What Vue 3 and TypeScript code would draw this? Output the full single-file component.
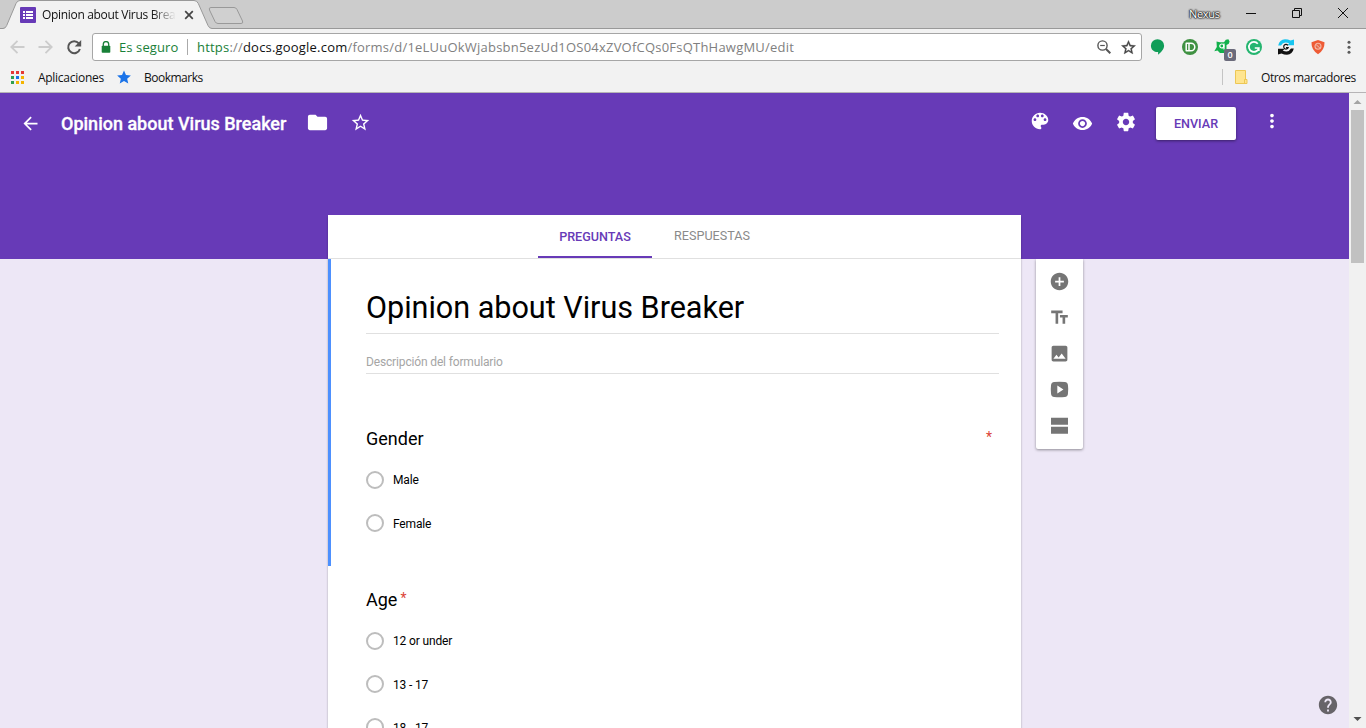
<script setup lang="ts">
interface Tool {
  name: string
  path: string
}
interface Question {
  title: string
  required: boolean
  options: string[]
}

const appColors: string[] = [
  '#e53935', '#e53935', '#e53935',
  '#2e9e4f', '#1a73e8', '#f4b400',
  '#2e9e4f', '#f4b400', '#f4b400',
]

const tools: Tool[] = [
  { name: 'add', path: 'M12 2C6.48 2 2 6.48 2 12s4.480 10 10 10 10-4.480 10-10S17.520 2 12 2zm5 11h-4v4h-2v-4H7v-2h4V7h2v4h4v2z' },
  { name: 'text', path: 'M2.5 4v3h5v12h3V7h5V4h-13zm19 5h-9v3h3v7h3v-7h3V9z' },
  { name: 'image', path: 'M21 19V5c0-1.100-.9-2-2-2H5c-1.100 0-2 .9-2 2v14c0 1.100.9 2 2 2h14c1.100 0 2-.9 2-2zM8.500 13.500l2.500 3.010L14.500 12l4.500 6H5l3.500-4.500z' },
  { name: 'video', path: 'M6 3.500Q12 3 18 3.500Q21.500 3.700 21.700 7.500Q22.300 12 21.700 16.500Q21.500 20.300 18 20.500Q12 21 6 20.500Q2.500 20.300 2.300 16.500Q1.700 12 2.300 7.500Q2.500 3.700 6 3.500zM9.500 7.500v9l7-4.500z' },
  { name: 'section', path: 'M2.300 3h19.400v8H2.300zM2.300 13.300h19.400v8H2.300z' },
]

const questions: Question[] = [
  { title: 'Gender', required: false, options: ['Male', 'Female'] },
  { title: 'Age', required: true, options: ['12 or under', '13 - 17', '18 - 17'] },
]
</script>

<template>
  <div class="window">
    <div class="tabstrip">
      <svg class="tabshape" width="250" height="29" viewBox="0 0 250 29">
        <path d="M0 28.500H3Q5.500 28.500 6.700 25.500L16 3.500Q17.300.5 20 .5H194Q197 .5 198.300 3.500L208 25.500Q209.300 28.500 212 28.500V29H0z" fill="#f2f2f2" />
        <path d="M0 28.500H3Q5.500 28.500 6.700 25.500L16 3.500Q17.300.5 20 .5H194Q197 .5 198.300 3.500L208 25.500Q209.300 28.500 212 28.500H250" fill="none" stroke="#999" />
        <path d="M211 7.500H234Q236 7.500 237 9.500L242.500 21Q243.500 23.500 241 23.500H218Q216 23.500 215 21.500L209.500 10Q208.500 7.500 211 7.500z" fill="#d0d0d0" stroke="#999" />
      </svg>
      <div class="tabcontent">
        <svg width="16" height="16" viewBox="0 0 16 16">
          <rect width="16" height="16" rx="1" fill="#673ab7" />
          <path d="M3 4h2v2H3zM6 4h7v2H6zM3 7h2v2H3zM6 7h7v2H6zM3 10h2v2H3zM6 10h7v2H6z" fill="#fff" />
        </svg>
        <span class="tabtitle">Opinion about Virus Breaker</span>
        <svg class="tabclose" width="10" height="10" viewBox="0 0 10 10"><path d="M1.200 1.200l7.600 7.600M8.800 1.200L1.200 8.800" stroke="#444" stroke-width="1.700" /></svg>
      </div>
      <span class="user">Nexus</span>
      <svg class="winctl" width="104" height="14" viewBox="0 0 104 14" fill="none" stroke="#111">
        <path d="M0 7.500h10M46.500 4.500h7v7h-7zM48.500 4V2.500h7v7H54M92 2l10 10M102 2l-10 10" />
      </svg>
    </div>

    <div class="toolbar">
      <svg class="nav" width="76" height="18" viewBox="0 0 76 18" fill="none" stroke="#ccc" stroke-width="1.800">
        <path d="M15.500 9H2.500M8.500 2.800L2.300 9l6.200 6.200M29.500 9h13M36.500 2.800L42.700 9l-6.200 6.200" />
        <path d="M69.800 5.300A6 6 0 1 0 70.900 11" stroke="#555" stroke-width="2" />
        <path d="M72.200 2v6.500h-6.500z" fill="#555" stroke="none" />
      </svg>
      <div class="omnibox">
        <svg width="10" height="12" viewBox="0 0 10 12">
          <path d="M2.300 5V3.300a2.700 2.700 0 0 1 5.400 0V5" fill="none" stroke="#188038" stroke-width="1.300" />
          <rect x=".7" y="4.700" width="8.600" height="7" rx=".8" fill="#188038" />
        </svg>
        <span class="secure">Es seguro</span>
        <span class="divider"></span>
        <span class="url"><span class="scheme">https</span>://<span class="host">docs.google.com</span><span class="path">/forms/d/1eLUuOkWjabsbn5ezUd1OS04xZVOfCQs0FsQThHawgMU/edit</span></span>
        <svg class="zoomicon" width="14" height="14" viewBox="0 0 14 14" fill="none" stroke="#555">
          <circle cx="5.500" cy="5.500" r="4.600" stroke-width="1.400" />
          <path d="M9 9l4.300 4.300" stroke-width="2" />
          <path d="M3.200 5.500h4.600" stroke-width="1.200" />
        </svg>
        <svg class="staricon" width="17" height="17" viewBox="0 0 24 24"><path fill="#444" stroke="#444" stroke-width=".5" d="M22 9.240l-7.190-.62L12 2 9.190 8.630 2 9.240l5.460 4.730L5.820 21 12 17.270 18.180 21l-1.630-7.030L22 9.240zM12 15.400l-3.760 2.270 1-4.280-3.320-2.880 4.380-.38L12 6.100l1.710 4.040 4.380.38-3.320 2.880 1 4.280L12 15.400z" /></svg>
      </div>
      <div class="extensions">
        <svg width="16" height="18" viewBox="0 0 16 18"><path d="M7.500 1.200a6.600 6.600 0 0 1 6.600 6.500c0 3.500-3 6.300-6 9.100v-2.700C3.800 14.200.9 11.500.9 7.700A6.600 6.600 0 0 1 7.500 1.200z" fill="#109d58" /></svg>
        <svg width="16" height="18" viewBox="0 0 16 18">
          <circle cx="8" cy="9" r="8" fill="#3f9142" />
          <path d="M4.200 5.200H9a3.800 3.800 0 0 1 0 7.600H4.200zM7 5.200v7.600" fill="none" stroke="#fff" stroke-width="1.500" stroke-linejoin="round" />
        </svg>
        <div class="badged">
          <svg width="16" height="18" viewBox="0 0 16 18">
            <path d="M2.500 3.500L6 4.300h4l1.800-2.600 2.600-.4 1.200 2.200-.8 2.300-2.300 1.200v5l-2 3H6L3.500 12.500.3 13.200 2.800 9z" fill="#12b04b" />
            <circle cx="7.800" cy="8" r="2" fill="none" stroke="#fff" stroke-width="1.200" />
            <path d="M10 5.500v6" stroke="#fff" stroke-width="1.200" />
          </svg>
          <span class="badge">0</span>
        </div>
        <svg width="16" height="18" viewBox="0 0 16 18">
          <circle cx="8" cy="9" r="8" fill="#25b570" />
          <path d="M11.800 5.700A5 5 0 1 0 12.800 10H8.800M12.800 10v3" fill="none" stroke="#fff" stroke-width="1.700" />
        </svg>
        <svg width="18" height="18" viewBox="0 0 18 18">
          <path d="M1.200 7.500Q2.500 1.500 8 1.300q3 0 5.500 1.200L17 1.500v5.700H10l2.300-1.700Q6.500 3 4 7.500z" fill="#18c5f0" />
          <path d="M16.800 10.500Q15.500 16.500 10 16.700q-3 0-5.500-1.200L1 16.500v-5.700H8l-2.300 1.700Q11.500 15 14 10.500z" fill="#111" />
          <path d="M10.800 7.300a2.300 2.300 0 1 0 .3 2.400H9" fill="none" stroke="#111" stroke-width="1.200" />
        </svg>
        <svg width="16" height="18" viewBox="0 0 16 18">
          <path d="M8 2l6.500 2.200q.3 7.500-6.500 12Q1.200 11.700 1.500 4.200z" fill="#ee5b35" />
          <circle cx="8" cy="8.300" r="3" fill="#e86b4a" stroke="#f5b8a6" stroke-width="1.100" />
          <path d="M6 6.500l4 3.700" stroke="#f5b8a6" />
        </svg>
        <svg width="6" height="18" viewBox="0 0 6 18" fill="#5a5a5a"><circle cx="3" cy="4.300" r="1.500" /><circle cx="3" cy="9.300" r="1.500" /><circle cx="3" cy="14.300" r="1.500" /></svg>
      </div>
    </div>

    <div class="bookmarks">
      <div class="apps">
        <i v-for="(c, i) in appColors" :key="i" :style="{ background: c }"></i>
      </div>
      <span class="aplicaciones">Aplicaciones</span>
      <svg class="bstar" width="14" height="14" viewBox="0 0 24 24"><path fill="#1a73e8" d="M12 .8l3.400 7.800 8.400.7-6.400 5.600 1.900 8.300L12 18.800l-7.300 4.400 1.900-8.300L.2 9.300l8.400-.7z" /></svg>
      <span class="marks">Bookmarks</span>
      <span class="bdivider"></span>
      <svg class="bfolder" width="13" height="14" viewBox="0 0 13 14"><path d="M.5.5h10v9h1.500v4H.5z" fill="#ffe590" stroke="#edc755" /><path d="M9.500 13V9.500H12" fill="none" stroke="#edc755" /></svg>
      <span class="otros">Otros marcadores</span>
    </div>

    <div class="viewport">
      <div class="page">
        <header>
          <svg class="arrow" width="21" height="21" viewBox="0 0 24 24"><path d="M20 11H7.830l5.590-5.590L12 4l-8 8 8 8 1.410-1.410L7.830 13H20v-2z" /></svg>
          <span class="doctitle">Opinion about Virus Breaker</span>
          <svg class="folder" width="23" height="23" viewBox="0 0 24 24"><path d="M10 4H4c-1.100 0-1.990.9-1.990 2L2 18c0 1.100.9 2 2 2h16c1.100 0 2-.9 2-2V8c0-1.100-.9-2-2-2h-8l-2-2z" /></svg>
          <svg class="fav" width="21" height="21" viewBox="0 0 24 24"><path d="M22 9.240l-7.190-.62L12 2 9.190 8.630 2 9.240l5.460 4.730L5.820 21 12 17.270 18.180 21l-1.630-7.030L22 9.240zM12 15.400l-3.760 2.270 1-4.280-3.320-2.880 4.380-.38L12 6.100l1.710 4.040 4.380.38-3.320 2.880 1 4.280L12 15.400z" /></svg>
          <svg class="palette" width="22" height="22" viewBox="0 0 24 24"><path d="M12 3c-4.970 0-9 4.030-9 9s4.030 9 9 9c.83 0 1.500-.67 1.500-1.500 0-.39-.15-.74-.39-1.010-.23-.26-.38-.61-.38-.99 0-.83.67-1.500 1.500-1.500H16c2.760 0 5-2.240 5-5 0-4.420-4.030-8-9-8zm-5.500 9c-.83 0-1.500-.67-1.500-1.500S5.670 9 6.500 9 8 9.670 8 10.500 7.330 12 6.500 12zm3-4C8.670 8 8 7.330 8 6.500S8.670 5 9.500 5s1.500.67 1.500 1.500S10.330 8 9.500 8zm5 0c-.83 0-1.500-.67-1.500-1.500S13.670 5 14.500 5s1.500.67 1.500 1.500S15.330 8 14.500 8zm3 4c-.83 0-1.500-.67-1.500-1.500S16.670 9 17.500 9s1.500.67 1.500 1.500-.67 1.500-1.500 1.500z" /></svg>
          <svg class="eye" width="21" height="21" viewBox="0 0 24 24"><path d="M12 4.500C7 4.500 2.730 7.610 1 12c1.730 4.390 6 7.500 11 7.500s9.270-3.110 11-7.500c-1.730-4.390-6-7.500-11-7.500zM12 17c-2.760 0-5-2.240-5-5s2.240-5 5-5 5 2.240 5 5-2.240 5-5 5zm0-8c-1.660 0-3 1.340-3 3s1.340 3 3 3 3-1.340 3-3-1.340-3-3-3z" /></svg>
          <svg class="gear" width="22" height="22" viewBox="0 0 24 24"><path d="M19.430 12.980c.04-.32.07-.64.07-.98s-.03-.66-.07-.98l2.110-1.650c.19-.15.24-.42.12-.64l-2-3.460c-.12-.22-.39-.3-.61-.22l-2.490 1c-.52-.4-1.080-.73-1.690-.98l-.38-2.650C14.460 2.180 14.250 2 14 2h-4c-.25 0-.46.18-.49.42l-.38 2.650c-.61.25-1.170.59-1.690.98l-2.490-1c-.23-.09-.49 0-.61.22l-2 3.460c-.13.22-.07.49.12.64l2.110 1.650c-.04.32-.07.65-.07.98s.03.66.07.98l-2.110 1.650c-.19.15-.24.42-.12.64l2 3.460c.12.22.39.3.61.22l2.490-1c.52.4 1.080.73 1.690.98l.38 2.650c.03.24.24.42.49.42h4c.25 0 .46-.18.49-.42l.38-2.650c.61-.25 1.170-.59 1.690-.98l2.490 1c.23.09.49 0 .61-.22l2-3.460c.12-.22.07-.49-.12-.64l-2.110-1.650zM12 15.500c-1.930 0-3.500-1.570-3.500-3.500s1.570-3.500 3.500-3.500 3.500 1.570 3.500 3.500-1.570 3.500-3.500 3.500z" /></svg>
          <button class="send">ENVIAR</button>
          <svg class="more" width="22" height="22" viewBox="0 0 24 24"><path d="M12 8c1.100 0 2-.9 2-2s-.9-2-2-2-2 .9-2 2 .9 2 2 2zm0 2c-1.100 0-2 .9-2 2s.9 2 2 2 2-.9 2-2-.9-2-2-2zm0 6c-1.100 0-2 .9-2 2s.9 2 2 2 2-.9 2-2-.9-2-2-2z" /></svg>
        </header>

        <main>
          <div class="card">
            <nav class="tabs">
              <span class="tab active">PREGUNTAS</span>
              <span class="tab">RESPUESTAS</span>
            </nav>
            <section class="block selected">
              <h1>Opinion about Virus Breaker</h1>
              <p class="desc">Descripción del formulario</p>
              <h2 class="first">{{ questions[0].title }}<b class="star-far">*</b></h2>
              <div v-for="o in questions[0].options" :key="o" class="option"><i></i><span>{{ o }}</span></div>
            </section>
            <section class="block">
              <h2 class="second">{{ questions[1].title }}<b v-if="questions[1].required">*</b></h2>
              <div v-for="o in questions[1].options" :key="o" class="option"><i></i><span>{{ o }}</span></div>
            </section>
          </div>
          <aside>
            <svg v-for="t in tools" :key="t.name" width="21" height="21" viewBox="0 0 24 24"><path :d="t.path" fill="#757575" fill-rule="evenodd" /></svg>
          </aside>
        </main>
        <svg class="help" width="22" height="22" viewBox="0 0 24 24"><path fill="#676469" d="M12 2C6.480 2 2 6.480 2 12s4.480 10 10 10 10-4.480 10-10S17.520 2 12 2zm1 17h-2v-2h2v2zm2.070-7.750l-.9.920C13.450 12.900 13 13.500 13 15h-2v-.5c0-1.100.45-2.100 1.170-2.830l1.240-1.260c.37-.36.59-.86.59-1.410 0-1.100-.9-2-2-2s-2 .9-2 2H8c0-2.210 1.790-4 4-4s4 1.790 4 4c0 .88-.36 1.680-.93 2.250z" /></svg>
      </div>
      <div class="scrollbar">
        <svg width="17" height="17" viewBox="0 0 17 17"><path d="M4.500 11L8.500 7l4 4z" fill="#a3a3a3" /></svg>
        <div class="thumb"></div>
        <svg class="down" width="17" height="17" viewBox="0 0 17 17"><path d="M4.500 6L8.500 10l4-4z" fill="#505050" /></svg>
      </div>
    </div>
  </div>
</template>

<style>
html, body { margin: 0; overflow: hidden; }
</style>

<style scoped>
* { box-sizing: border-box; }
svg { display: block; flex: none; }
.window { width: 1366px; height: 728px; display: flex; flex-direction: column; overflow: hidden; background: #f2f2f2; font-family: "Open Sans", "Noto Sans", sans-serif; font-size: 12px; color: #111; }
span { white-space: nowrap; }

.tabstrip { position: relative; height: 29px; flex: none; background: #ccc; border-bottom: 1px solid #999; display: flex; align-items: center; }
.tabshape { position: absolute; left: 0; top: 0; }
.tabcontent { position: relative; display: flex; align-items: center; margin: 2px 0 0 20px; }
.tabtitle { width: 134px; margin-left: 6px; overflow: hidden; line-height: 18px; letter-spacing: -0.32px; -webkit-mask-image: linear-gradient(90deg, #000 82%, transparent); mask-image: linear-gradient(90deg, #000 82%, transparent); }
.tabclose { margin-left: 8px; }
.user { margin-left: auto; margin-top: -2px; color: #fff; font-size: 11px; letter-spacing: -0.3px; width: 32px; text-shadow: 0 0 1px #000, 0 0 2px #222, 0 0 2px #222, 0 0 2px #222; }
.winctl { margin: -2px 16px 0 25px; }

.toolbar { height: 33px; flex: none; display: flex; align-items: center; padding-top: 3px; }
.nav { margin-left: 9px; }
.omnibox { margin-left: 7px; width: 1050px; height: 28px; border: 1px solid #a6a6a6; border-radius: 3px; background: #fff; display: flex; align-items: center; padding-left: 8px; font-size: 14px; line-height: 20px; }
.secure { color: #188038; margin-left: 8px; width: 60px; font-size: 13px; letter-spacing: .1px; }
.divider { width: 1px; height: 16px; background: #aaa; margin-left: 8px; }
.url { margin-left: 9px; color: #808080; font-size: 13px; letter-spacing: .2px; }
.scheme { color: #188038; }
.host { color: #111; }
.path { letter-spacing: .22px; }
.zoomicon { margin-left: auto; margin-right: 9px; }
.staricon { margin-right: 4px; }
.extensions { display: flex; align-items: center; margin-left: 8px; gap: 16px; flex: none; }
.extensions > svg:nth-child(5) { margin: 0 -1px; }
.extensions > svg:last-child { margin-left: 4px; }
.badged { position: relative; }
.badge { position: absolute; left: 10px; top: 11px; width: 12px; height: 12px; border-radius: 2px; background: #6b6b7b; color: #fff; font-size: 9px; font-weight: 600; line-height: 12px; text-align: center; }

.bookmarks { height: 31px; flex: none; border-bottom: 1px solid #b6b4b6; display: flex; align-items: center; }
.apps { display: grid; grid-template-columns: repeat(3, 3px); gap: 2px; margin-left: 11px; width: 13px; }
.apps i { height: 3px; }
.aplicaciones { margin-left: 14px; width: 66px; letter-spacing: -.28px; }
.bstar { margin-left: 13px; }
.marks { margin-left: 13px; letter-spacing: -.5px; }
.bdivider { width: 1px; height: 16px; background: #c4c4c4; margin-left: auto; }
.bfolder { margin-left: 12px; }
.otros { margin-left: 13px; width: 96px; margin-right: 9px; letter-spacing: -.42px; }

.viewport { flex: 1; min-height: 0; display: flex; font-family: Roboto, sans-serif; }
.page { position: relative; width: 1349px; overflow: hidden; background: #ede7f6; }
header { height: 166px; background: #673ab7; display: flex; align-items: flex-start; }
header svg { fill: #fff; }
.arrow { margin: 19.500px 0 0 20px; }
.doctitle { margin: 18px 0 0 20px; width: 226px; color: #fff; font-size: 18px; font-weight: 500; line-height: 26px; -webkit-text-stroke: .3px #fff; }
.folder { margin: 18px 0 0 18.500px; }
.fav { margin: 19px 0 0 21px; }
.palette { margin: 17px 0 0 auto; }
.eye { margin: 20px 0 0 21.500px; }
.gear { margin: 18px 0 0 22px; }
.send { margin: 14px 0 0 19px; width: 80px; height: 33px; border: 0; border-radius: 2px; background: #fff; color: #673ab7; font: 500 12.6px Roboto, sans-serif; padding: 0; box-shadow: 0 1px 3px rgba(0, 0, 0, .45); }
.more { margin: 17px 66.500px 0 24.500px; }

main { display: flex; align-items: flex-start; margin: -44px 0 0 328px; }
.card { width: 693px; height: 560px; background: #fff; box-shadow: 0 2px 2px rgba(0, 0, 0, .3); clip-path: inset(0 -4px 0 -4px); }
.tabs { height: 44px; border-bottom: 1px solid #e0e0e0; display: flex; padding-left: 210px; }
.tab { height: 43px; width: 114px; text-align: center; font-size: 12.6px; line-height: 42px; color: #8a8a8a; }
.tab + .tab { width: 120px; }
.active { color: #673ab7; font-weight: 500; line-height: 44px; border-bottom: 2px solid #673ab7; }
.block { padding: 0 22px 0 35px; border-left: 3px solid transparent; }
.selected { height: 307px; border-color: #4d90fe; }
h1, h2, p { margin: 0; font-weight: 400; color: #000; }
h1 { padding-top: 29px; height: 75px; border-bottom: 1px solid #e0e0e0; font-size: 30.6px; line-height: 40px; letter-spacing: -.03px; }
.desc { height: 40px; padding-top: 20px; border-bottom: 1px solid #e0e0e0; color: #a5a5a5; font-size: 12px; line-height: 16px; letter-spacing: -.15px; }
h2 { font-size: 18px; line-height: 24px; display: flex; }
h2 b { font-weight: 400; font-size: 14px; color: #db4437; margin: -2px 0 0 3px; }
h2 .star-far { margin: -2px 7px 0 auto; }
.first { padding-top: 53px; height: 97px; }
.second { padding-top: 22px; height: 66px; }
.option { height: 43px; display: flex; align-items: flex-start; font-size: 12px; letter-spacing: -.15px; }
.option i { width: 18px; height: 18px; border: 2px solid #bdbdbd; border-radius: 50%; }
.option span { margin-left: 9px; line-height: 18px; color: #000; }
.option + .option span { padding-top: 1px; }

aside { margin: 44px 0 0 15px; width: 47px; height: 190px; background: #fff; border-radius: 0 0 2px 2px; box-shadow: 0 1px 3px rgba(0, 0, 0, .4); clip-path: inset(0 -4px -5px -4px); padding-top: 12px; display: flex; flex-direction: column; align-items: center; gap: 15px; }
.help { position: absolute; right: 10.500px; bottom: 12.500px; }

.scrollbar { width: 17px; background: #f1f1f1; display: flex; flex-direction: column; align-items: center; }
.thumb { width: 13px; height: 153px; background: #c1c1c1; }
.down { margin-top: auto; }
</style>
